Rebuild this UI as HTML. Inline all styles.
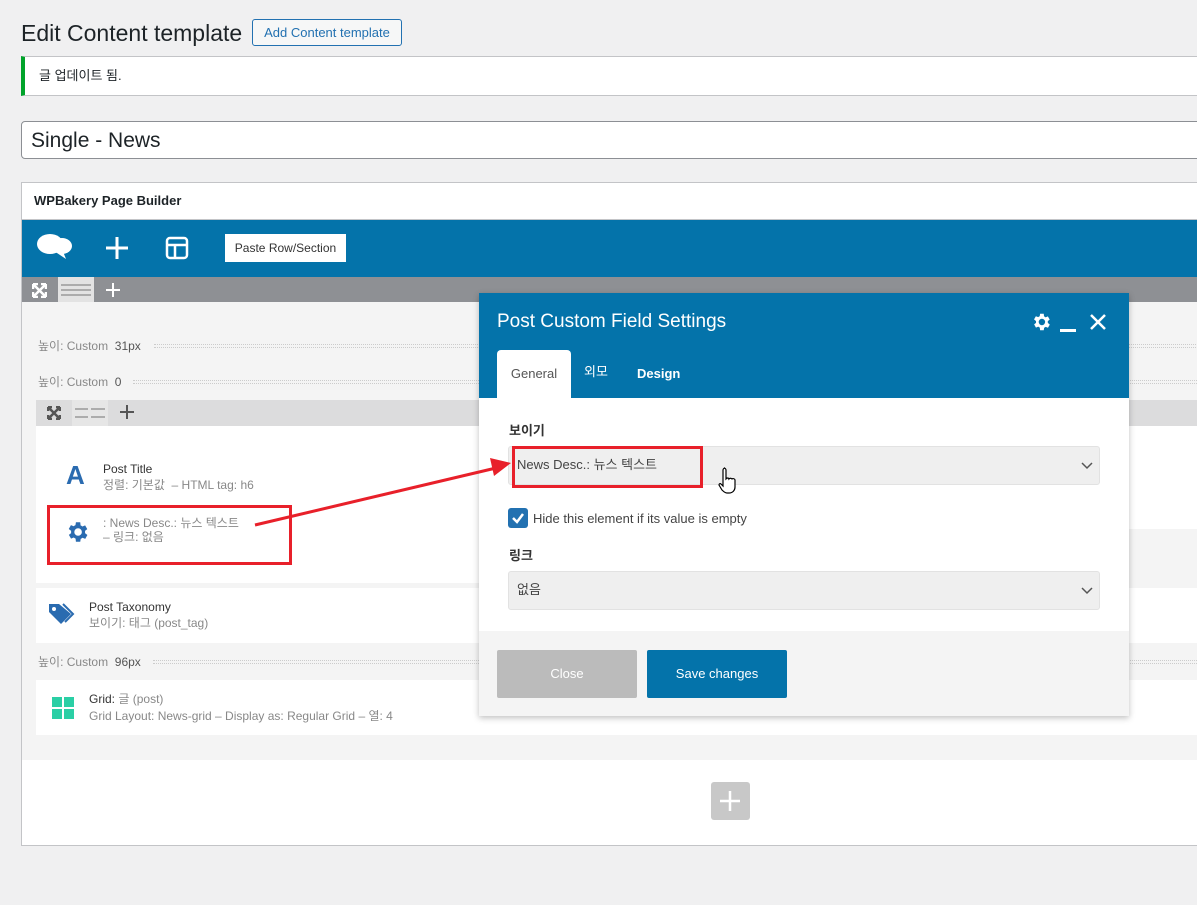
<!DOCTYPE html>
<html><head><meta charset="utf-8"><style>
*{box-sizing:border-box;margin:0;padding:0}
body{width:1197px;height:905px;overflow:hidden;background:#f0f0f1;font-family:"Liberation Sans","Noto Sans CJK KR",sans-serif;color:#1d2327;position:relative}
.a{position:absolute;line-height:1.2}
.lbl{font-size:12px;color:#888}
.dots{position:absolute;height:4px;border-top:1px dotted #ccc;border-bottom:1px dotted #ccc}
</style></head><body>
<div class="a" style="left:21px;top:20px;font-size:23px;color:#1d2327">Edit Content template</div>
<div class="a" style="left:252px;top:19px;width:150px;height:27px;border:1px solid #2271b1;border-radius:3px;background:#f6f7f7;color:#2271b1;font-size:13px;line-height:25px;text-align:center">Add Content template</div>
<div class="a" style="left:21px;top:56px;width:1190px;height:40px;background:#fff;border:1px solid #c3c4c7;border-left:4px solid #00a32a;font-size:13px;line-height:38px;padding-left:14px">글 업데이트 됨.</div>
<div class="a" style="left:21px;top:121px;width:1190px;height:38px;background:#fff;border:1px solid #8c8f94;border-radius:4px;font-size:21px;line-height:38px;padding-left:9px">Single - News</div>
<div class="a" style="left:21px;top:182px;width:1190px;height:664px;background:#fff;border:1px solid #c3c4c7"></div>
<div class="a" style="left:34px;top:193px;font-size:13px;font-weight:bold">WPBakery Page Builder</div>
<div class="a" style="left:22px;top:219px;width:1180px;height:1px;background:#c3c4c7"></div>
<div class="a" style="left:22px;top:220px;width:1180px;height:57px;background:#0473aa"></div>
<svg class="a" style="left:36px;top:231px" width="38" height="30" viewBox="0 0 38 30"><ellipse cx="14" cy="13" rx="13" ry="10" fill="#fff"/><ellipse cx="26" cy="15" rx="10" ry="8" fill="#fff"/><path d="M18 20 L30 28 L26 18Z" fill="#fff"/></svg>
<svg class="a" style="left:105px;top:236px" width="24" height="24"><path d="M12 1V23M1 12H23" stroke="#fff" stroke-width="3"/></svg>
<svg class="a" style="left:165px;top:236px" width="24" height="24"><rect x="2" y="2" width="20" height="20" rx="3" fill="none" stroke="#fff" stroke-width="2.5"/><path d="M2 9H22M10 9V22" stroke="#fff" stroke-width="2.5"/></svg>
<div class="a" style="left:225px;top:234px;width:121px;height:28px;background:#fff;font-size:12px;line-height:28px;text-align:center;color:#333">Paste Row/Section</div>
<div class="a" style="left:22px;top:277px;width:1180px;height:25px;background:#8e9094"></div>
<svg class="a" style="left:32px;top:283px" width="15" height="15"><path d="M1 1L14 14M14 1L1 14M1 1h5M1 1v5M14 1h-5M14 1v5M1 14h5M1 14v-5M14 14h-5M14 14v-5" stroke="#fff" stroke-width="2.5"/></svg>
<div class="a" style="left:58px;top:277px;width:36px;height:25px;background:#e3e3e3"></div>
<svg class="a" style="left:61px;top:283px" width="30" height="14"><path d="M0 2H30M0 7H30M0 12H30" stroke="#999" stroke-width="1.5"/></svg>
<svg class="a" style="left:105px;top:282px" width="16" height="16"><path d="M8 1V15M1 8H15" stroke="#fff" stroke-width="2"/></svg>
<div class="a" style="left:22px;top:302px;width:1180px;height:458px;background:#f4f4f4"></div>
<div class="a lbl" style="left:38px;top:339px">높이: Custom &nbsp;<span style="color:#555">31px</span></div>
<div class="dots" style="left:154px;top:344px;width:1050px"></div>
<div class="a lbl" style="left:38px;top:375px">높이: Custom &nbsp;<span style="color:#555">0</span></div>
<div class="dots" style="left:133px;top:380px;width:1070px"></div>
<div class="a" style="left:36px;top:400px;width:1166px;height:26px;background:#dcdcdd"></div>
<svg class="a" style="left:47px;top:406px" width="14" height="14"><path d="M1 1L13 13M13 1L1 13M1 1h4M1 1v4M13 1h-4M13 1v4M1 13h4M1 13v-4M13 13h-4M13 13v-4" stroke="#555" stroke-width="2.5"/></svg>
<div class="a" style="left:72px;top:400px;width:36px;height:26px;background:#e6e6e6"></div>
<svg class="a" style="left:75px;top:406px" width="30" height="14"><path d="M0 3H13M16 3H30M0 11H13M16 11H30" stroke="#999" stroke-width="1.5"/></svg>
<svg class="a" style="left:119px;top:404px" width="16" height="16"><path d="M8 1V15M1 8H15" stroke="#555" stroke-width="2"/></svg>
<div class="a" style="left:36px;top:426px;width:1166px;height:157px;background:#fff"></div>
<div class="a" style="left:1129px;top:529px;width:70px;height:59px;background:#f4f4f4"></div>
<div class="a" style="left:66px;top:460px;font-size:26px;font-weight:bold;color:#2a6bb0;font-family:'Liberation Sans',sans-serif">A</div>
<div class="a" style="left:103px;top:462px;font-size:12px;color:#333">Post Title</div>
<div class="a" style="left:103px;top:478px;font-size:12px;color:#888">정렬: 기본값 &nbsp;– HTML tag: h6</div>
<svg class="a" style="left:64px;top:519px" width="26" height="26" viewBox="0 0 24 24"><path fill="#2a6bb0" d="M19.4 13a7.5 7.5 0 000-2l2.1-1.6-2-3.5-2.5 1a7.6 7.6 0 00-1.7-1L15 3h-4l-.4 2.7a7.6 7.6 0 00-1.7 1l-2.5-1-2 3.5L6.6 11a7.5 7.5 0 000 2l-2.1 1.6 2 3.5 2.5-1a7.6 7.6 0 001.7 1L11 21h4l.4-2.7a7.6 7.6 0 001.7-1l2.5 1 2-3.5zM13 15.5a3.5 3.5 0 110-7 3.5 3.5 0 010 7z"/></svg>
<div class="a" style="left:103px;top:516px;font-size:12px;color:#888;line-height:14px">: News Desc.: 뉴스 텍스트<br>– 링크: 없음</div>
<div class="a" style="left:47px;top:505px;width:245px;height:60px;border:3px solid #e8202a"></div>
<div class="a" style="left:36px;top:588px;width:1166px;height:55px;background:#fff"></div>
<svg class="a" style="left:48px;top:602px" width="30" height="24" viewBox="0 0 30 24"><path d="M1 2v8l12 12 10-10L11 2Z" fill="#2a6bb0"/><circle cx="6" cy="7" r="2" fill="#fff"/><path d="M15 2l10 10-8 8" fill="none" stroke="#2a6bb0" stroke-width="2"/></svg>
<div class="a" style="left:89px;top:600px;font-size:12px;color:#333">Post Taxonomy</div>
<div class="a" style="left:89px;top:616px;font-size:12px;color:#888">보이기: 태그 (post_tag)</div>
<div class="a lbl" style="left:38px;top:655px">높이: Custom &nbsp;<span style="color:#555">96px</span></div>
<div class="dots" style="left:153px;top:660px;width:1050px"></div>
<div class="a" style="left:36px;top:680px;width:1166px;height:55px;background:#fff"></div>
<svg class="a" style="left:52px;top:697px" width="22" height="22"><rect x="0" y="0" width="10" height="10" fill="#2acfa5"/><rect x="12" y="0" width="10" height="10" fill="#2acfa5"/><rect x="0" y="12" width="10" height="10" fill="#2acfa5"/><rect x="12" y="12" width="10" height="10" fill="#2acfa5"/></svg>
<div class="a" style="left:89px;top:692px;font-size:12px;color:#888"><span style="color:#333">Grid:</span> 글 (post)</div>
<div class="a" style="left:89px;top:709px;font-size:12px;color:#888">Grid Layout: News-grid – Display as: Regular Grid – 열: 4</div>
<div class="a" style="left:22px;top:760px;width:1180px;height:85px;background:#fff"></div>
<div class="a" style="left:711px;top:782px;width:39px;height:38px;background:#c8c8c8;border-radius:3px"></div>
<svg class="a" style="left:719px;top:790px" width="22" height="22"><path d="M11 1V21M1 11H21" stroke="#fff" stroke-width="2.5"/></svg>

<div class="a" style="left:479px;top:293px;width:650px;height:423px;background:#fff;box-shadow:0 2px 6px rgba(0,0,0,.25)"></div>
<div class="a" style="left:479px;top:293px;width:650px;height:105px;background:#0473aa"></div>
<div class="a" style="left:497px;top:311px;font-size:19px;color:#fff">Post Custom Field Settings</div>
<svg class="a" style="left:1030px;top:311px" width="22" height="22" viewBox="0 0 24 24"><path fill="#fff" d="M19.4 13a7.5 7.5 0 000-2l2.1-1.6-2-3.5-2.5 1a7.6 7.6 0 00-1.7-1L15 3h-4l-.4 2.7a7.6 7.6 0 00-1.7 1l-2.5-1-2 3.5L6.6 11a7.5 7.5 0 000 2l-2.1 1.6 2 3.5 2.5-1a7.6 7.6 0 001.7 1L11 21h4l.4-2.7a7.6 7.6 0 001.7-1l2.5 1 2-3.5zM13 15.5a3.5 3.5 0 110-7 3.5 3.5 0 010 7z"/></svg>
<div class="a" style="left:1060px;top:329px;width:16px;height:3px;background:#fff"></div>
<svg class="a" style="left:1090px;top:314px" width="16" height="16"><path d="M1 1L15 15M15 1L1 15" stroke="#fff" stroke-width="2.5"/></svg>
<div class="a" style="left:497px;top:350px;width:74px;height:48px;background:#fff;border-radius:4px 4px 0 0;font-size:13px;color:#555;text-align:center;line-height:48px">General</div>
<div class="a" style="left:584px;top:364px;font-size:13px;color:#fff">외모</div>
<div class="a" style="left:637px;top:366px;font-size:13px;color:#fff;font-weight:bold">Design</div>
<div class="a" style="left:509px;top:423px;font-size:13px;color:#333;font-weight:bold">보이기</div>
<div class="a" style="left:508px;top:446px;width:592px;height:39px;background:#efefef;border:1px solid #e2e2e2;border-radius:3px"></div>
<div class="a" style="left:517px;top:457px;font-size:13px;color:#444">News Desc.: 뉴스 텍스트</div>
<svg class="a" style="left:1081px;top:462px" width="12" height="8"><path d="M1 1L6 6L11 1" fill="none" stroke="#555" stroke-width="1.5"/></svg>
<div class="a" style="left:512px;top:446px;width:191px;height:42px;border:3px solid #e8202a"></div>
<svg class="a" style="left:718px;top:466px" width="20" height="28" viewBox="0 0 20 28"><path d="M6 2c1 0 2 1 2 2v9l1-1c1 0 2 0 2 1 1-1 2-1 3 0 1-1 3 0 3 1v7c0 3-2 6-6 6h-2c-2 0-4-2-5-3l-3-5c0-1 1-2 2-1l2 2V4c0-1 1-2 2-2z" fill="#fff" stroke="#000" stroke-width="1.2"/></svg>
<div class="a" style="left:508px;top:508px;width:20px;height:20px;background:#2271b1;border-radius:3px"></div>
<svg class="a" style="left:511px;top:511px" width="14" height="14"><path d="M2 7L6 11L12 3" fill="none" stroke="#fff" stroke-width="2.5"/></svg>
<div class="a" style="left:533px;top:511px;font-size:13px;color:#444">Hide this element if its value is empty</div>
<div class="a" style="left:509px;top:548px;font-size:13px;color:#333;font-weight:bold">링크</div>
<div class="a" style="left:508px;top:571px;width:592px;height:39px;background:#efefef;border:1px solid #e2e2e2;border-radius:3px"></div>
<div class="a" style="left:517px;top:582px;font-size:13px;color:#444">없음</div>
<svg class="a" style="left:1081px;top:587px" width="12" height="8"><path d="M1 1L6 6L11 1" fill="none" stroke="#555" stroke-width="1.5"/></svg>
<div class="a" style="left:479px;top:631px;width:650px;height:85px;background:#f4f4f4"></div>
<div class="a" style="left:497px;top:650px;width:140px;height:48px;background:#bbb;border-radius:2px;color:#fff;font-size:13px;line-height:48px;text-align:center">Close</div>
<div class="a" style="left:647px;top:650px;width:140px;height:48px;background:#0473aa;border-radius:2px;color:#fff;font-size:13px;line-height:48px;text-align:center">Save changes</div>

<svg class="a" style="left:0;top:0" width="1197" height="905"><path d="M255 525L496 468" stroke="#e8202a" stroke-width="3"/><path d="M511 463L490 458L494 476Z" fill="#e8202a"/></svg>
</body></html>
